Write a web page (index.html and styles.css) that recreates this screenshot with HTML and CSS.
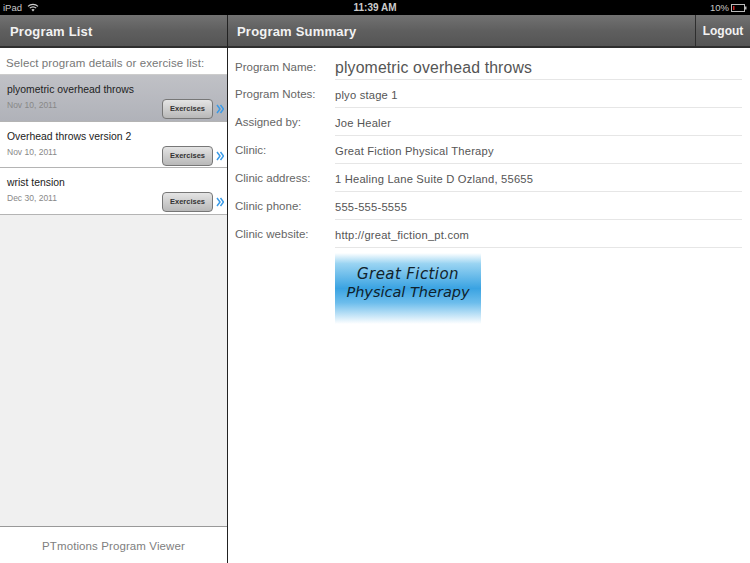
FILE: index.html
```html
<!DOCTYPE html>
<html lang="en">
<head>
<meta charset="utf-8">
<title>Program Summary</title>
<link rel="stylesheet" href="styles.css">
</head>
<body>
<div class="status">
  <div class="status-left">
    <span>iPad</span>
    <svg class="wifi" width="12" height="9" viewBox="0 0 12 9"><path d="M1 3.4a7 7 0 0 1 10 0M2.8 5.2a4.5 4.5 0 0 1 6.4 0" fill="none" stroke="#ccc" stroke-width="1.2"/><path d="M6 8.6 4.4 6.8a2.3 2.3 0 0 1 3.2 0z" fill="#ccc"/></svg>
  </div>
  <div class="status-time">11:39 AM</div>
  <div class="status-right">
    <span>10%</span>
    <svg width="16" height="8" viewBox="0 0 16 8"><rect x=".5" y=".5" width="13" height="7" fill="none" stroke="#bbb"/><rect x="2" y="2" width="1.5" height="4" fill="#c22"/><rect x="14" y="2.5" width="1.5" height="3" fill="#bbb"/></svg>
  </div>
</div>
<div class="main">
  <aside class="sidebar">
    <header class="bar"><h1 class="bar-title bar-title-left">Program List</h1></header>
    <div class="prompt">Select program details or exercise list:</div>
    <ul class="programs">
      <li class="program selected">
        <div class="program-name">plyometric overhead throws</div>
        <div class="program-date">Nov 10, 2011</div>
        <div class="program-action"><span class="btn">Exercises</span><svg class="chev" width="8" height="10" viewBox="0 0 8 10"><path d="M1 1l3 4-3 4M4.5 1l3 4-3 4" fill="none" stroke="#3a9be8" stroke-width="1.5"/></svg></div>
      </li>
      <li class="program">
        <div class="program-name">Overhead throws version 2</div>
        <div class="program-date">Nov 10, 2011</div>
        <div class="program-action"><span class="btn">Exercises</span><svg class="chev" width="8" height="10" viewBox="0 0 8 10"><path d="M1 1l3 4-3 4M4.5 1l3 4-3 4" fill="none" stroke="#3a9be8" stroke-width="1.5"/></svg></div>
      </li>
      <li class="program">
        <div class="program-name">wrist tension</div>
        <div class="program-date">Dec 30, 2011</div>
        <div class="program-action"><span class="btn">Exercises</span><svg class="chev" width="8" height="10" viewBox="0 0 8 10"><path d="M1 1l3 4-3 4M4.5 1l3 4-3 4" fill="none" stroke="#3a9be8" stroke-width="1.5"/></svg></div>
      </li>
    </ul>
    <footer class="side-foot">PTmotions Program Viewer</footer>
  </aside>
  <section class="detail">
    <header class="bar">
      <h1 class="bar-title">Program Summary</h1>
      <div class="logout">Logout</div>
    </header>
    <div class="fields">
      <div class="field first"><div class="label">Program Name:</div><div class="value big">plyometric overhead throws</div></div>
      <div class="field"><div class="label">Program Notes:</div><div class="value">plyo stage 1</div></div>
      <div class="field"><div class="label">Assigned by:</div><div class="value">Joe Healer</div></div>
      <div class="field"><div class="label">Clinic:</div><div class="value">Great Fiction Physical Therapy</div></div>
      <div class="field"><div class="label">Clinic address:</div><div class="value">1 Healing Lane Suite D Ozland, 55655</div></div>
      <div class="field"><div class="label">Clinic phone:</div><div class="value">555-555-5555</div></div>
      <div class="field"><div class="label">Clinic website:</div><div class="value">http://great_fiction_pt.com</div></div>
      <div class="logo"><span>Great Fiction</span><span>Physical Therapy</span></div>
    </div>
  </section>
</div>
</body>
</html>
```
FILE: styles.css
```css
* { box-sizing: border-box; }
html, body { margin: 0; padding: 0; }
body {
  width: 750px; height: 563px; overflow: hidden; background: #fff;
  font-family: "Liberation Sans", Arial, sans-serif; color: #333;
  display: flex; flex-direction: column;
}
.status {
  height: 15px; background: #000; color: #c8c8c8; font-size: 9.5px;
  display: grid; grid-template-columns: 1fr auto 1fr; align-items: center; padding: 0 3px;
}
.status-left { display: flex; align-items: center; gap: 5px; }
.status-time { font-weight: 700; color: #ccc; font-size: 10px; }
.status-right { display: flex; align-items: center; gap: 2px; justify-content: flex-end; }
.main { flex: 1; display: flex; min-height: 0; }
.sidebar {
  width: 228px; border-right: 1px solid #222; display: flex; flex-direction: column;
}
.detail { flex: 1; display: flex; flex-direction: column; min-width: 0; }
.bar {
  height: 33px; flex: none; display: flex; align-items: stretch; justify-content: space-between;
  background: linear-gradient(#727272, #5f5f5f 50%, #555);
  border-bottom: 2px solid #2e2e2e;
}
.bar-title {
  margin: 0; font-size: 13px; font-weight: 700; color: #f2f2f2; letter-spacing: .2px;
  line-height: 33px; padding-left: 9px;
}
.bar-title-left { padding-left: 10px; }
.logout {
  width: 55px; border-left: 1px solid #2e2e2e; color: #f2f2f2; font-size: 12px;
  font-weight: 700; text-align: center; line-height: 33px;
}
.prompt {
  height: 27px; flex: none; font-size: 11.5px; color: #777; line-height: 30px; padding-left: 6px;
  border-bottom: 1px solid #ccc; letter-spacing: .1px;
}
.programs { list-style: none; margin: 0; padding: 0; flex: 1; background: #f0f0f0; }
.program {
  height: 46.6px; background: #fff; border-bottom: 1px solid #b4b4b4; padding: 8px 0 0 7px;
  display: grid; grid-template-columns: 1fr auto; grid-template-rows: 15px auto;
}
.program.selected { background: linear-gradient(#c0c1c6, #b0b2b9); }
.program-name { grid-column: 1 / 3; font-size: 10.4px; color: #222; line-height: 14px; }
.program-date { font-size: 8.5px; color: #888; line-height: 14px; }
.program-action { display: flex; align-items: center; gap: 3px; padding-right: 3px; height: 20px; margin-top: 1px; }
.btn {
  width: 51px; height: 20px; border: 1px solid #777; border-radius: 4px;
  background: linear-gradient(#e4e4e4, #b8b8b8); color: #333;
  font-size: 7.5px; font-weight: 700; text-align: center; line-height: 18px;
}
.chev { flex: none; }
.side-foot {
  height: 37px; flex: none; border-top: 1px solid #999; font-size: 11.5px; color: #808080;
  text-align: center; line-height: 38px; letter-spacing: .1px;
}
.fields { padding: 4px 8px 0 7px; }
.field { display: flex; height: 28px; }
.label { width: 100px; flex: none; font-size: 11.5px; color: #666; line-height: 29px; }
.first .label { line-height: 30px; }
.value {
  flex: 1; font-size: 11.2px; color: #555; line-height: 31px; border-bottom: 1px solid #e6e6e6;
  letter-spacing: .2px;
}
.value.big { font-size: 15.8px; line-height: 31px; letter-spacing: .15px; }
.logo {
  width: 146px; height: 71px; margin: 5px 0 0 100px;
  background: linear-gradient(#fff, #9ad4f2 15%, #3aa3e2 50%, #6cbdec 70%, #fff);
  display: flex; flex-direction: column; align-items: center; justify-content: center;
  color: #10222c; font-family: "DejaVu Sans", sans-serif; font-style: italic;
  font-size: 15px; line-height: 18px; padding-bottom: 12px; white-space: nowrap; letter-spacing: .4px;
}
.logo span:last-child { font-size: 14.5px; letter-spacing: 0; }
```
